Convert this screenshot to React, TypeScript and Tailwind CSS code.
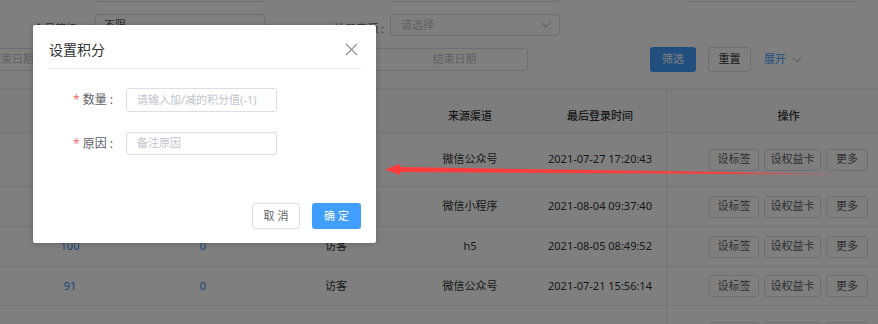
import React from "react";

const Chevron = ({ className = "" }: { className?: string }) => (
  <svg className={className} width="10" height="6" viewBox="0 0 10 6" fill="none">
    <path d="M1 1l4 4 4-4" stroke="#c0c4cc" strokeWidth="1.2" />
  </svg>
);

const cols = ["w-[140px]", "w-[126px]", "w-[140px]", "w-[128px]", "w-[132px]"];

type Row = { a: string; b: string; c: string; d: string; e: string; h: string };
const rows: Row[] = [
  { a: "120", b: "0", c: "访客", d: "微信公众号", e: "2021-07-27 17:20:43", h: "h-[54px]" },
  { a: "80", b: "0", c: "访客", d: "微信小程序", e: "2021-08-04 09:37:40", h: "h-[40px]" },
  { a: "100", b: "0", c: "访客", d: "h5", e: "2021-08-05 08:49:52", h: "h-[40px]" },
  { a: "91", b: "0", c: "访客", d: "微信公众号", e: "2021-07-21 15:56:14", h: "h-[39px]" },
  { a: "60", b: "0", c: "访客", d: "微信公众号", e: "2021-07-20 10:12:05", h: "h-[54px]" },
];

export default function App() {
  return (
    <div className="relative w-[878px] h-[324px] overflow-hidden bg-white font-['Noto_Sans','Noto_Sans_CJK_SC',sans-serif] text-[11px] text-[#333]">
      {/* Filters */}
      <div className="flex flex-col">
        <div className="flex items-center h-[22px] -mt-[20px]">
          <div className="w-[95px] pr-3 text-right text-[#606266]">会员昵称 :</div>
          <div className="w-[170px] h-[22px] border border-[#dcdfe6] rounded-[3px]" />
          <div className="w-[125px] pr-3 text-right text-[#606266]">手机号码 :</div>
          <div className="w-[170px] h-[22px] border border-[#dcdfe6] rounded-[3px]" />
          <div className="w-[126px] pr-3 text-right text-[#606266]">会员卡号 :</div>
          <div className="w-[172px] h-[22px] border border-[#dcdfe6] rounded-[3px]" />
        </div>
        <div className="flex items-center h-[22px] mt-[12px]">
          <div className="w-[95px] pr-3 pt-[9px] text-right text-[#606266]">会员等级 :</div>
          <div className="w-[170px] h-[22px] border border-[#dcdfe6] rounded-[3px] flex items-center px-[8px] text-[#606266]">不限</div>
          <div className="w-[125px] pr-[6px] pt-[9px] text-right text-[#606266]">注册来源 :</div>
          <div className="w-[170px] h-[22px] border border-[#dcdfe6] rounded-[3px] flex items-center justify-between pl-[10px] pr-[8px] text-[#c0c4cc]">
            <span>请选择</span>
            <Chevron />
          </div>
        </div>
        <div className="flex items-center h-[23px] mt-[12px]">
          <div className="-ml-[150px] w-[190px] h-[23px] border border-[#dcdfe6] rounded-[3px] flex items-center text-[#c0c4cc]">
            <span className="w-[80px] text-center">开始日期</span>
            <span className="w-[16px] text-center">-</span>
            <span className="w-[94px] text-right pr-[5px]">结束日期</span>
          </div>
          <div className="ml-[176px] w-[312px] h-[23px] border border-[#dcdfe6] rounded-[3px] flex items-center text-[#c0c4cc]">
            <span className="w-[146px] text-center">开始日期</span>
            <span className="w-[20px] text-center">-</span>
            <span className="w-[146px] text-center">结束日期</span>
          </div>
          <div className="ml-[122px] w-[46px] h-[25px] rounded-[3px] bg-[#409eff] text-white flex items-center justify-center">筛选</div>
          <div className="ml-[12px] w-[43px] h-[25px] rounded-[3px] border border-[#dcdfe6] text-[#333] flex items-center justify-center">重置</div>
          <div className="ml-[13px] text-[#409eff]">展开</div>
          <Chevron className="ml-[6px]" />
        </div>
      </div>

      {/* Table */}
      <div className="mt-[17px] border-t border-[#e8eaec] w-[910px]">
        <div className="flex h-[44px] border-b border-[#e8eaec] bg-[#fafafa] text-[#333] font-medium">
          {["积分", "成长值", "会员类型", "来源渠道", "最后登录时间"].map((t, i) => (
            <div key={t} className={`${cols[i]} flex items-center justify-center pt-[12px]`}>{t}</div>
          ))}
          <div className="w-[244px] border-l border-[#e8eaec] flex items-center justify-center pt-[12px]">操作</div>
        </div>
        {rows.map((r, idx) => (
          <div key={idx} className={`flex ${r.h} border-b border-[#e8eaec]`}>
            <div className={`${cols[0]} flex items-center justify-center text-[#2d8cf0]`}>{r.a}</div>
            <div className={`${cols[1]} flex items-center justify-center text-[#2d8cf0]`}>{r.b}</div>
            <div className={`${cols[2]} flex items-center justify-center`}>{r.c}</div>
            <div className={`${cols[3]} flex items-center justify-center`}>{r.d}</div>
            <div className={`${cols[4]} flex items-center justify-center`}>{r.e}</div>
            <div className="w-[244px] border-l border-[#e8eaec] flex items-center justify-center gap-[5px]">
              <div className="w-[50px] h-[22px] border border-[#dcdfe6] rounded-[3px] flex items-center justify-center text-[#606266]">设标签</div>
              <div className="w-[57px] h-[22px] border border-[#dcdfe6] rounded-[3px] flex items-center justify-center text-[#606266]">设权益卡</div>
              <div className="w-[42px] h-[22px] border border-[#dcdfe6] rounded-[3px] flex items-center justify-center text-[#606266]">更多</div>
            </div>
          </div>
        ))}
      </div>

      {/* Overlay */}
      <div className="absolute inset-0 bg-black/50" />

      {/* Dialog */}
      <div className="absolute left-[33px] top-[25px] w-[343px] h-[218px] bg-white rounded-[2px] shadow-[0_1px_6px_rgba(0,0,0,0.2)] flex flex-col">
        <div className="mx-[15px] h-[44px] border-b border-[#e8eaec] flex items-center justify-between pt-[6px] pl-[1px] pr-[3px]">
          <span className="text-[14px] text-[#303133]">设置积分</span>
          <svg width="13" height="13" viewBox="0 0 13 13" fill="none">
            <path d="M1 1l11 11M12 1L1 12" stroke="#909399" strokeWidth="1.2" />
          </svg>
        </div>
        <div className="flex items-center mt-[19px]">
          <div className="w-[80px] text-right text-[12px] text-[#606266]">
            <span className="text-[#f56c6c] mr-[3px]">*</span>数量 :
          </div>
          <div className="ml-[13px] w-[151px] h-[24px] border border-[#dcdfe6] rounded-[3px] flex items-center pl-[10px] text-[#c0c4cc]">
            请输入加/减的积分值(-1)
          </div>
        </div>
        <div className="flex items-center mt-[20px]">
          <div className="w-[80px] text-right text-[12px] text-[#606266]">
            <span className="text-[#f56c6c] mr-[3px]">*</span>原因 :
          </div>
          <div className="ml-[13px] w-[151px] h-[23px] border border-[#dcdfe6] rounded-[3px] flex items-center pl-[10px] text-[#c0c4cc]">
            备注原因
          </div>
        </div>
        <div className="flex justify-end gap-[12px] pr-[15px] mt-[48px]">
          <div className="w-[48px] h-[26px] border border-[#dcdfe6] rounded-[3px] flex items-center justify-center text-[#606266] tracking-[3px] pl-[3px]">取消</div>
          <div className="w-[49px] h-[26px] bg-[#409eff] rounded-[3px] flex items-center justify-center text-white tracking-[3px] pl-[3px]">确定</div>
        </div>
      </div>

      {/* Annotation arrow */}
      <svg className="absolute inset-0 pointer-events-none" width="878" height="324" viewBox="0 0 878 324">
        <defs>
          <linearGradient id="fade" x1="385" y1="0" x2="835" y2="0" gradientUnits="userSpaceOnUse">
            <stop offset="0" stopColor="#ff3b3b" stopOpacity="1" />
            <stop offset="0.75" stopColor="#ff3b3b" stopOpacity="0.9" />
            <stop offset="1" stopColor="#ff3b3b" stopOpacity="0.1" />
          </linearGradient>
        </defs>
        <polygon points="398,167 835,173.6 835,174.6 398,172" fill="url(#fade)" />
        <polygon points="385,169.5 401,163.5 398,169.5 401,175.5" fill="#ff3b3b" />
      </svg>
    </div>
  );
}
